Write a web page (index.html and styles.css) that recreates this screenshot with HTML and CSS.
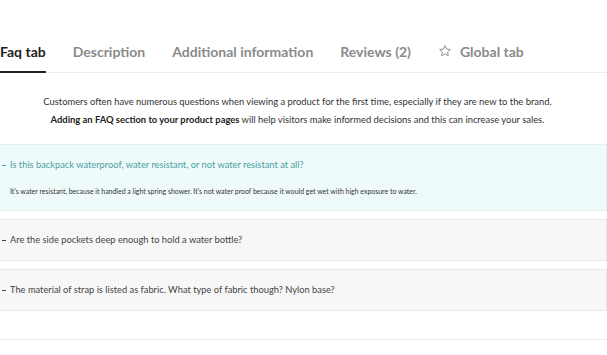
FILE: index.html
```html
<!DOCTYPE html>
<html>
<head>
<meta charset="utf-8">
<link rel="stylesheet" href="styles.css">
</head>
<body>
<div class="page">
  <nav class="tabs">
    <div class="tab active">Faq tab</div>
    <div class="tab">Description</div>
    <div class="tab">Additional information</div>
    <div class="tab">Reviews (2)</div>
    <div class="tab tab-icon">
      <svg class="star" viewBox="0 0 24 24" width="14" height="14"><path d="M12 2.8l2.75 5.9 6.45.75-4.78 4.4 1.28 6.37L12 17.02l-5.7 3.2 1.28-6.37-4.78-4.4 6.45-.75z" fill="none" stroke="#8a8a8a" stroke-width="1.6" stroke-linejoin="round"/></svg>
      <span>Global tab</span>
    </div>
  </nav>
  <div class="intro">
    <p>Customers often have numerous questions when viewing a product for the first time, especially if they are new to the brand.</p>
    <p><strong>Adding an FAQ section to your product pages</strong> will help visitors make informed decisions and this can increase your sales.</p>
  </div>
  <div class="faq">
    <div class="item open">
      <div class="q"><span class="dash"></span>Is this backpack waterproof, water resistant, or not water resistant at all?</div>
      <div class="a">It's water resistant, because it handled a light spring shower. It's not water proof because it would get wet with high exposure to water.</div>
    </div>
    <div class="item">
      <div class="q"><span class="dash"></span>Are the side pockets deep enough to hold a water bottle?</div>
    </div>
    <div class="item">
      <div class="q"><span class="dash"></span>The material of strap is listed as fabric. What type of fabric though? Nylon base?</div>
    </div>
  </div>
  <div class="end"></div>
</div>
</body>
</html>
```
FILE: styles.css
```css
* { box-sizing: border-box; }
html, body { margin: 0; padding: 0; background: #fff; }
body { font-family: Lato, "Noto Sans", sans-serif; color: #333; overflow: hidden; }
.page { margin-left: -12px; width: 619px; }
.tabs {
  display: flex;
  gap: 27px;
  padding: 42px 0 0 12px;
  border-bottom: 1px solid #ececec;
}
.tab {
  font-size: 14px;
  line-height: 20px;
  font-weight: 700;
  color: #8a8a8a;
  padding-bottom: 9px;
  border-bottom: 2px solid transparent;
  margin-bottom: -1px;
  white-space: nowrap;
}
.tab.active { color: #222; border-bottom-color: #222; }
.tab-icon { display: flex; align-items: flex-start; gap: 8px; }
.star { margin-top: 2px; }
.intro {
  padding-top: 20px;
  text-align: center;
  font-size: 9.4px;
  line-height: 18px;
  color: #333;
}
.intro p { margin: 0; }
.intro strong { color: #222; font-weight: 700; }
.faq { margin-top: 15px; display: flex; flex-direction: column; gap: 8px; }
.item {
  border: 1px solid #e8e8e8;
  background: #f7f7f7;
  padding: 10px 14px 10px 13px;
}
.item.open { background: #effbfb; border-color: #e3eeee; padding-bottom: 13px; }
.q {
  font-size: 9.3px;
  line-height: 20px;
  color: #444;
  display: flex;
  align-items: center;
}
.item.open .q { color: #4a9e9f; }
.dash { width: 4px; height: 1px; background: currentColor; margin-right: 4px; flex: none; }
.a {
  margin-top: 10px;
  font-size: 6.95px;
  line-height: 12px;
  color: #333;
  padding-left: 8px;
}
.end { margin-top: 28px; border-top: 1px solid #ececec; }
```
